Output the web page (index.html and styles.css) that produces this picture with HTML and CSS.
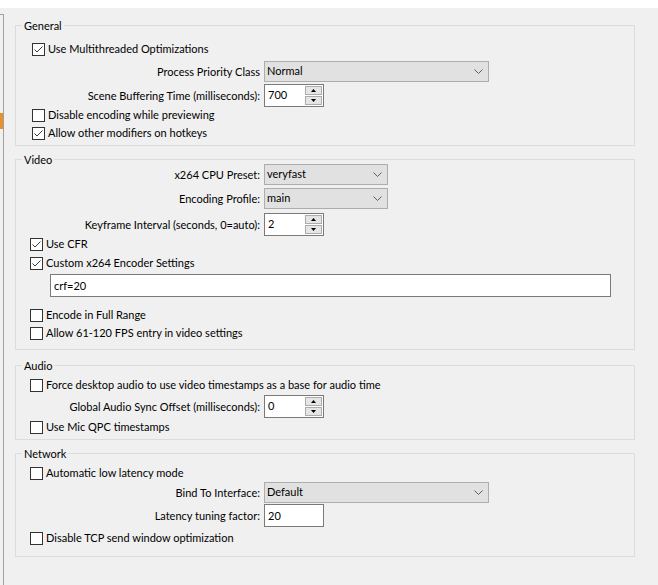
FILE: index.html
```html
<!DOCTYPE html>
<html>
<head>
<meta charset="utf-8">
<link rel="stylesheet" href="styles.css">
</head>
<body>
<div class="topbar"></div>
<div class="layout">
  <div class="sidebar"><div class="marker"></div></div>
  <main class="content">

    <section class="group group-general">
      <div class="group-title">General</div>
      <div class="check-row indent-wide">
        <span class="checkbox"><svg viewBox="0 0 11 11"><path d="M1.5 5.5 L4 8 L9.5 2.5"/></svg></span>
        <span>Use Multithreaded Optimizations</span>
      </div>
      <div class="form-row mt3">
        <span class="label">Process Priority Class</span>
        <div class="select select-wide"><span>Normal</span><svg class="chev" viewBox="0 0 9 5"><path d="M0.5 0.5 L4.5 4.5 L8.5 0.5"/></svg></div>
      </div>
      <div class="form-row mt2">
        <span class="label">Scene Buffering Time (milliseconds):</span>
        <div class="spin"><span class="spin-value">700</span><span class="spin-buttons"><span class="spin-btn"><svg viewBox="0 0 5 3"><path d="M2.5 0 L5 3 L0 3Z"/></svg></span><span class="spin-btn"><svg viewBox="0 0 5 3"><path d="M0 0 L5 0 L2.5 3Z"/></svg></span></span></div>
      </div>
      <div class="check-row indent-wide">
        <span class="checkbox"></span>
        <span>Disable encoding while previewing</span>
      </div>
      <div class="check-row indent-wide mt1">
        <span class="checkbox"><svg viewBox="0 0 11 11"><path d="M1.5 5.5 L4 8 L9.5 2.5"/></svg></span>
        <span>Allow other modifiers on hotkeys</span>
      </div>
    </section>

    <section class="group group-video">
      <div class="group-title">Video</div>
      <div class="form-row">
        <span class="label">x264 CPU Preset:</span>
        <div class="select select-narrow"><span>veryfast</span><svg class="chev" viewBox="0 0 9 5"><path d="M0.5 0.5 L4.5 4.5 L8.5 0.5"/></svg></div>
      </div>
      <div class="form-row mt3">
        <span class="label">Encoding Profile:</span>
        <div class="select select-narrow"><span>main</span><svg class="chev" viewBox="0 0 9 5"><path d="M0.5 0.5 L4.5 4.5 L8.5 0.5"/></svg></div>
      </div>
      <div class="form-row mt4">
        <span class="label">Keyframe Interval (seconds, 0=auto):</span>
        <div class="spin"><span class="spin-value">2</span><span class="spin-buttons"><span class="spin-btn"><svg viewBox="0 0 5 3"><path d="M2.5 0 L5 3 L0 3Z"/></svg></span><span class="spin-btn"><svg viewBox="0 0 5 3"><path d="M0 0 L5 0 L2.5 3Z"/></svg></span></span></div>
      </div>
      <div class="check-row">
        <span class="checkbox"><svg viewBox="0 0 11 11"><path d="M1.5 5.5 L4 8 L9.5 2.5"/></svg></span>
        <span>Use CFR</span>
      </div>
      <div class="check-row mt2">
        <span class="checkbox"><svg viewBox="0 0 11 11"><path d="M1.5 5.5 L4 8 L9.5 2.5"/></svg></span>
        <span>Custom x264 Encoder Settings</span>
      </div>
      <div class="textbox textbox-wide mt2">crf=20</div>
      <div class="check-row mt10">
        <span class="checkbox"></span>
        <span>Encode in Full Range</span>
      </div>
      <div class="check-row mt1">
        <span class="checkbox"></span>
        <span>Allow 61-120 FPS entry in video settings</span>
      </div>
    </section>

    <section class="group group-audio">
      <div class="group-title">Audio</div>
      <div class="check-row">
        <span class="checkbox"></span>
        <span>Force desktop audio to use video timestamps as a base for audio time</span>
      </div>
      <div class="form-row mt1">
        <span class="label">Global Audio Sync Offset (milliseconds):</span>
        <div class="spin"><span class="spin-value">0</span><span class="spin-buttons"><span class="spin-btn"><svg viewBox="0 0 5 3"><path d="M2.5 0 L5 3 L0 3Z"/></svg></span><span class="spin-btn"><svg viewBox="0 0 5 3"><path d="M0 0 L5 0 L2.5 3Z"/></svg></span></span></div>
      </div>
      <div class="check-row mt1">
        <span class="checkbox"></span>
        <span>Use Mic QPC timestamps</span>
      </div>
    </section>

    <section class="group group-network">
      <div class="group-title">Network</div>
      <div class="check-row">
        <span class="checkbox"></span>
        <span>Automatic low latency mode</span>
      </div>
      <div class="form-row">
        <span class="label">Bind To Interface:</span>
        <div class="select select-wide"><span>Default</span><svg class="chev" viewBox="0 0 9 5"><path d="M0.5 0.5 L4.5 4.5 L8.5 0.5"/></svg></div>
      </div>
      <div class="form-row mt1">
        <span class="label">Latency tuning factor:</span>
        <div class="textbox textbox-small">20</div>
      </div>
      <div class="check-row mt3">
        <span class="checkbox"></span>
        <span>Disable TCP send window optimization</span>
      </div>
    </section>

  </main>
</div>
</body>
</html>
```
FILE: styles.css
```css
html, body {
  margin: 0;
  padding: 0;
}
body {
  width: 658px;
  height: 585px;
  overflow: hidden;
  background: #f0f0f0;
  font-family: Lato, "Noto Sans", sans-serif;
  font-size: 11px;
  color: #000;
}
.topbar {
  height: 8px;
  background: #ffffff;
}
.layout {
  display: flex;
  height: 577px;
  overflow: hidden;
}
.sidebar {
  width: 3px;
  height: 600px;
  margin-top: 6px;
  border-top: 1px solid #a0a0a0;
  border-right: 1px solid #a0a0a0;
}
.marker {
  margin-top: 98px;
  height: 16px;
  background: #e8912c;
}
.content {
  margin-left: 11px;
  padding-top: 17px;
}
.group {
  position: relative;
  width: 620px;
  box-sizing: border-box;
  border: 1px solid #dcdcdc;
  display: flex;
  flex-direction: column;
  align-items: flex-start;
}
.group-title {
  position: absolute;
  top: -8px;
  left: 6px;
  padding: 0 2px;
  line-height: 15px;
  background: #f0f0f0;
}
.group-general {
  padding: 15px 0 3px;
}
.group-video {
  margin-top: 13px;
  padding: 4px 0 7px;
}
.group-audio {
  margin-top: 15px;
  padding: 11px 0 3px;
}
.group-network {
  margin-top: 13px;
  padding: 11px 0 9px;
}

.check-row {
  height: 17px;
  display: flex;
  align-items: center;
  padding-left: 14px;
  white-space: nowrap;
  line-height: 15px;
}
.check-row.indent-wide {
  padding-left: 16px;
}
.check-row > span:last-child {
  margin-top: -2px;
}
.checkbox {
  width: 13px;
  height: 13px;
  box-sizing: border-box;
  border: 1px solid #333333;
  background: #ffffff;
  margin-right: 3px;
  flex: none;
  display: flex;
}
.checkbox svg {
  width: 11px;
  height: 11px;
  fill: none;
  stroke: #3a3a3a;
  stroke-width: 1;
}

.form-row {
  display: grid;
  grid-template-columns: 244px auto;
  column-gap: 4px;
  align-items: center;
  white-space: nowrap;
}
.label {
  text-align: right;
}

.select {
  height: 21px;
  box-sizing: border-box;
  background: #e1e1e1;
  border: 1px solid #adadad;
  display: flex;
  align-items: center;
  justify-content: space-between;
  padding: 0 5px 0 2px;
}
.select > span {
  margin-top: -2px;
}
.select-wide {
  width: 225px;
}
.select-narrow {
  width: 124px;
}
.chev {
  width: 9px;
  height: 5px;
  fill: none;
  stroke: #606060;
  stroke-width: 1;
}

.spin, .textbox {
  height: 23px;
  box-sizing: border-box;
  background: #ffffff;
  border: 1px solid #7a7a7a;
  display: flex;
  align-items: center;
}
.spin {
  width: 60px;
}
.spin-value {
  flex: 1;
  padding-left: 3px;
  margin-top: -3px;
}
.spin-buttons {
  align-self: stretch;
  width: 17px;
  margin: 1px;
  display: flex;
  flex-direction: column;
  gap: 1px;
}
.spin-btn {
  flex: 1;
  box-sizing: border-box;
  background: #e5e5e5;
  border: 1px solid #acacac;
  display: flex;
  align-items: center;
  justify-content: center;
}
.spin-btn svg {
  width: 5px;
  height: 3px;
  fill: #000;
}
.textbox {
  padding-left: 3px;
}
.textbox-wide {
  margin-left: 34px;
  width: 561px;
}
.textbox-small {
  width: 60px;
}

.mt1 { margin-top: 1px; }
.mt2 { margin-top: 2px; }
.mt3 { margin-top: 3px; }
.mt4 { margin-top: 4px; }
.mt10 { margin-top: 10px; }
```
